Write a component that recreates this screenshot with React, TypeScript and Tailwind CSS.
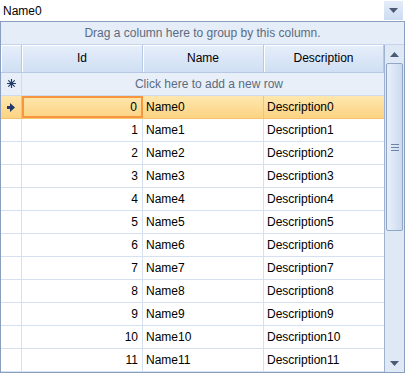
import React from "react";

const rows = Array.from({ length: 12 }, (_, i) => i);

function Triangle({ up }: { up?: boolean }) {
  return (
    <svg width="9" height="5" viewBox="0 0 9 5">
      {up ? (
        <path d="M0 5 L4.5 0 L9 5 Z" fill="#4b5b74" />
      ) : (
        <path d="M0 0 L9 0 L4.5 5 Z" fill="#4b5b74" />
      )}
    </svg>
  );
}

function CurrentArrow() {
  return (
    <svg width="8" height="9" viewBox="0 0 8 9">
      <path d="M3 0 L8 4.5 L3 9 L3 6 L0 6 L0 3 L3 3 Z" fill="#1f3a6b" />
    </svg>
  );
}

function NewRowStar() {
  return (
    <svg width="9" height="9" viewBox="0 0 9 9">
      <path
        d="M4.5 0 V9 M0 4.5 H9 M1.3 1.3 L7.7 7.7 M7.7 1.3 L1.3 7.7"
        stroke="#1f3a6b"
        strokeWidth="1.2"
      />
    </svg>
  );
}

function HeaderCell({ label, w }: { label: string; w: string }) {
  return (
    <div
      className={`${w} flex h-full items-center justify-center border-r border-[#b7c9e2] bg-gradient-to-b from-[#e6eefa] to-[#cfdff4] shadow-[inset_1px_1px_0_#ffffff] text-[12px] text-black`}
    >
      {label}
    </div>
  );
}

export default function App() {
  return (
    <div className="h-[373px] w-[405px] overflow-hidden bg-white font-['Liberation_Sans',sans-serif] text-[12px]">
      {/* combo box */}
      <div className="flex h-[21px] items-center bg-white">
        <span className="flex-1 pl-[3px] text-black">Name0</span>
        <div className="mr-[2px] flex h-[19px] w-[19px] items-center justify-center bg-gradient-to-b from-[#e4edf9] to-[#cddcf1]">
          <Triangle />
        </div>
      </div>

      {/* grid */}
      <div className="flex h-[352px] flex-col border border-[#8a9fbe] bg-white">
        <div className="flex h-[23px] items-center justify-center border-b border-[#c4d4ea] bg-[#e5edf8] text-[#5b6b80]">
          Drag a column here to group by this column.
        </div>

        <div className="flex flex-1 overflow-hidden">
          {/* data area */}
          <div className="flex w-[383px] flex-col">
            <div className="flex h-[29px] border-b border-[#b7c9e2]">
              <div className="h-full w-[21px] border-r border-[#b7c9e2] bg-gradient-to-b from-[#e6eefa] to-[#cfdff4] shadow-[inset_1px_1px_0_#ffffff]" />
              <HeaderCell label="Id" w="w-[121px]" />
              <HeaderCell label="Name" w="w-[121px]" />
              <HeaderCell label="Description" w="w-[120px]" />
            </div>

            <div className="flex h-[24px] border-b border-[#d0dcee] bg-[#e8eff9]">
              <div className="flex w-[21px] items-center justify-center border-r border-[#d0dcee]">
                <NewRowStar />
              </div>
              <div className="flex flex-1 items-center justify-center pl-[12px] text-[#5b6b80]">
                Click here to add a new row
              </div>
            </div>

            {rows.map((i) => {
              const sel = i === 0;
              return (
                <div
                  key={i}
                  className={`flex h-[23px] shrink-0 border-b ${
                    sel
                      ? "border-[#f3c46b] bg-gradient-to-b from-[#fee7ad] to-[#fcd383]"
                      : "border-[#d5e1f1] bg-white"
                  }`}
                >
                  <div
                    className={`flex w-[21px] items-center justify-center border-r ${
                      sel ? "border-[#f3c46b]" : "border-[#d5e1f1]"
                    }`}
                  >
                    {sel && <CurrentArrow />}
                  </div>
                  <div
                    className={`flex w-[121px] items-center justify-end pr-[4px] ${
                      sel
                        ? "border-2 border-[#f7963f]"
                        : "border-r border-[#d5e1f1]"
                    }`}
                  >
                    {i}
                  </div>
                  <div
                    className={`flex w-[121px] items-center pl-[3px] border-r ${
                      sel ? "border-[#f3c46b]" : "border-[#d5e1f1]"
                    }`}
                  >
                    Name{i}
                  </div>
                  <div className="flex w-[120px] items-center pl-[3px]">
                    Description{i}
                  </div>
                </div>
              );
            })}
          </div>

          {/* vertical scrollbar */}
          <div className="flex w-[20px] flex-col border-l border-[#9fb3d1] bg-[#dfe8f5]">
            <div className="flex h-[18px] items-center justify-center">
              <Triangle up />
            </div>
            <div className="flex flex-1 flex-col px-[1px]">
              <div className="flex h-[168px] items-center justify-center rounded-[2px] border border-[#8fa6c8] bg-gradient-to-r from-[#e8eff9] via-[#dbe6f5] to-[#cbdaef]">
                <div className="flex flex-col gap-[2px]">
                  <div className="h-px w-[8px] bg-[#6d83a6]" />
                  <div className="h-px w-[8px] bg-[#6d83a6]" />
                  <div className="h-px w-[8px] bg-[#6d83a6]" />
                </div>
              </div>
            </div>
            <div className="flex h-[18px] items-center justify-center">
              <Triangle />
            </div>
          </div>
        </div>
      </div>
    </div>
  );
}
